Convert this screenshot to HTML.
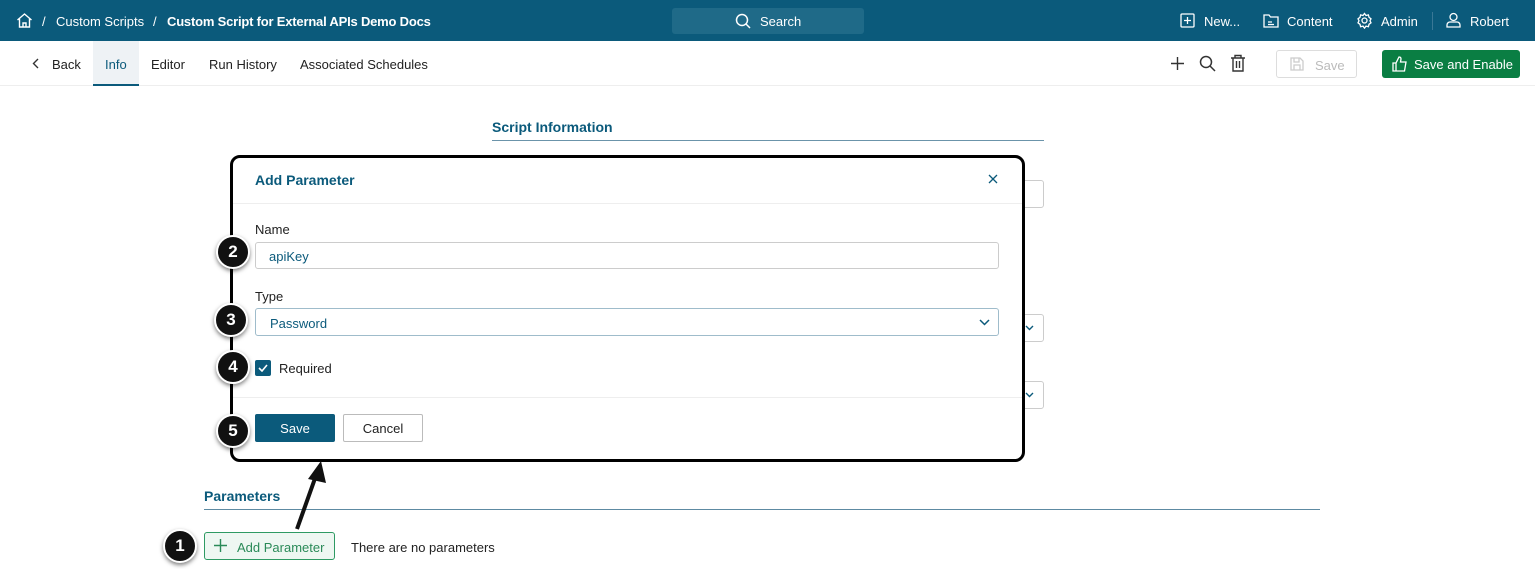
<!DOCTYPE html>
<html><head><style>
*{box-sizing:border-box;margin:0;padding:0}
body{width:1535px;height:569px;overflow:hidden;background:#fff;font-family:"Liberation Sans",sans-serif;font-size:13px;color:#222;position:relative}
.a{position:absolute}
.top{left:0;top:0;width:1535px;height:41px;background:#0b5a7b;color:#fff}
.top span{position:absolute;top:14px;font-size:13px}
.sub{left:0;top:41px;width:1535px;height:45px;border-bottom:1px solid #eee}
.sub span{position:absolute;top:16px;font-size:13px;color:#222}
.badge{width:34px;height:34px;border-radius:50%;background:#111;color:#fff;font-weight:bold;font-size:17px;text-align:center;line-height:30px;border:2px solid #fff;box-shadow:0 2px 4px rgba(0,0,0,.5)}
</style></head><body>
<div class="a top">
<svg class="a" style="left:16px;top:12px" width="17" height="17" viewBox="0 0 17 17" fill="none" stroke="#fff" stroke-width="1.4"><path d="M1.5 8L8.5 2l7 6M3.5 6.5V15h10V6.5M7 15v-4h3v4"/></svg>
<span style="left:42px">/</span><span style="left:56px">Custom Scripts</span><span style="left:153px">/</span><span style="left:167px;font-weight:bold;letter-spacing:-0.2px">Custom Script for External APIs Demo Docs</span>
<div class="a" style="left:672px;top:8px;width:192px;height:26px;background:#1f6a88;border-radius:3px"></div>
<svg class="a" style="left:735px;top:13px" width="16" height="16" fill="none" stroke="#fff" stroke-width="1.5"><circle cx="7" cy="7" r="5.5"/><path d="M11 11l4 4"/></svg>
<span style="left:760px">Search</span>
<svg class="a" style="left:1180px;top:13px" width="15" height="15" fill="none" stroke="#fff" stroke-width="1.3"><rect x="1" y="1" width="13" height="13" rx="1"/><path d="M7.5 4v7M4 7.5h7"/></svg>
<span style="left:1204px">New...</span>
<svg class="a" style="left:1263px;top:13px" width="16" height="15" fill="none" stroke="#fff" stroke-width="1.3"><path d="M1 2h5l1.5 2H15v10H1z"/><path d="M5 9h4M5 11.5h6"/></svg>
<span style="left:1287px">Content</span>
<svg class="a" style="left:1356px;top:12px" width="17" height="17" fill="none" stroke="#fff" stroke-width="1.3"><circle cx="8.5" cy="8.5" r="2.5"/><path d="M8.5 1.5l1.5 2 2.4-.6.6 2.4 2 1.5-1 2 1 2-2 1.5-.6 2.4-2.4-.6-1.5 2-1.5-2-2.4.6-.6-2.4-2-1.5 1-2-1-2 2-1.5.6-2.4 2.4.6z"/></svg>
<span style="left:1381px">Admin</span>
<div class="a" style="left:1432px;top:12px;width:1px;height:18px;background:#3a7896"></div>
<svg class="a" style="left:1446px;top:12px" width="15" height="16" fill="none" stroke="#fff" stroke-width="1.3"><circle cx="7.5" cy="5" r="3.5"/><path d="M1 15v-2a3 3 0 013-3h7a3 3 0 013 3v2z"/></svg>
<span style="left:1470px">Robert</span>
</div>
<div class="a sub">
<svg class="a" style="left:32px;top:17px" width="7" height="11" fill="none" stroke="#333" stroke-width="1.4"><path d="M6 1L1.5 5.5 6 10"/></svg>
<span style="left:52px">Back</span>
<div class="a" style="left:93px;top:0;width:46px;height:45px;background:#eef2f5;border-bottom:2px solid #0b5a7b"></div>
<span style="left:105px;color:#0b5a7b">Info</span><span style="left:151px">Editor</span><span style="left:209px">Run History</span><span style="left:300px">Associated Schedules</span>
<svg class="a" style="left:1171px;top:16px" width="13" height="13" stroke="#333" stroke-width="1.4"><path d="M6.5 0v13M0 6.5h13"/></svg>
<svg class="a" style="left:1199px;top:14px" width="17" height="17" fill="none" stroke="#333" stroke-width="1.5"><circle cx="7" cy="7" r="5.5"/><path d="M11 11l5 5"/></svg>
<svg class="a" style="left:1230px;top:13px" width="16" height="18" fill="none" stroke="#333" stroke-width="1.4"><path d="M1 4h14M5 4V1.5h6V4M3 4v13h10V4M6.5 7v7M9.5 7v7"/></svg>
<div class="a" style="left:1276px;top:9px;width:81px;height:28px;border:1px solid #ddd;border-radius:3px;color:#bbb;padding:7px 0 0 38px">Save</div>
<svg class="a" style="left:1290px;top:16px" width="14" height="14" fill="none" stroke="#ccc" stroke-width="1.3"><path d="M1 1h9l3 3v9H1zM4 1v4h5V1M4 13V8h6v5"/></svg>
<div class="a" style="left:1382px;top:9px;width:138px;height:28px;background:#0a7e43;border-radius:3px;color:#fff;padding:7px 0 0 32px">Save and Enable</div>
<svg class="a" style="left:1392px;top:15px" width="16" height="16" fill="none" stroke="#fff" stroke-width="1.3"><path d="M1 7h3v8H1zM4 7l3-6c1.5 0 2 1 2 2l-.5 3H14l-1.5 9H4"/></svg>
</div>
<div class="a" style="left:492px;top:119px;font-weight:bold;font-size:14px;color:#0b5a7b">Script Information</div>
<div class="a" style="left:492px;top:140px;width:552px;height:1px;background:#6b94aa"></div>
<div class="a" style="left:1000px;top:180px;width:44px;height:28px;border:1px solid #ccc;border-radius:3px"></div>
<div class="a" style="left:1000px;top:314px;width:44px;height:28px;border:1px solid #ccc;border-radius:3px"></div>
<svg class="a" style="left:1025px;top:325px" width="9" height="6" fill="none" stroke="#0b5a7b" stroke-width="1.4"><path d="M1 1l3.5 3.5L8 1"/></svg>
<div class="a" style="left:1000px;top:381px;width:44px;height:28px;border:1px solid #ccc;border-radius:3px"></div>
<svg class="a" style="left:1025px;top:392px" width="9" height="6" fill="none" stroke="#0b5a7b" stroke-width="1.4"><path d="M1 1l3.5 3.5L8 1"/></svg>
<div class="a" style="left:230px;top:155px;width:795px;height:307px;border:3px solid #000;border-radius:10px;background:#fff"></div>
<div class="a" style="left:255px;top:172px;font-weight:bold;font-size:14px;color:#0b5a7b">Add Parameter</div>
<svg class="a" style="left:988px;top:174px" width="10" height="10" stroke="#0b5a7b" stroke-width="1.3"><path d="M1 1l8 8M9 1L1 9"/></svg>
<div class="a" style="left:233px;top:203px;width:789px;height:1px;background:#eee"></div>
<div class="a" style="left:255px;top:222px">Name</div>
<div class="a" style="left:255px;top:242px;width:744px;height:27px;border:1px solid #ccc;border-radius:3px;padding:6px 0 0 13px;color:#0b5a7b">apiKey</div>
<div class="a" style="left:255px;top:289px">Type</div>
<div class="a" style="left:255px;top:308px;width:744px;height:28px;border:1px solid #9fbccb;border-radius:3px;padding:7px 0 0 14px;color:#0b5a7b">Password</div>
<svg class="a" style="left:979px;top:319px" width="11" height="8" fill="none" stroke="#0b5a7b" stroke-width="1.5"><path d="M1 1l4.5 4.5L10 1"/></svg>
<div class="a" style="left:255px;top:360px;width:16px;height:16px;background:#0b5a7b;border-radius:2px"></div>
<svg class="a" style="left:258px;top:364px" width="10" height="8" fill="none" stroke="#fff" stroke-width="1.6"><path d="M1 4l3 3 5-6"/></svg>
<div class="a" style="left:279px;top:361px">Required</div>
<div class="a" style="left:233px;top:397px;width:789px;height:1px;background:#eee"></div>
<div class="a" style="left:255px;top:414px;width:80px;height:28px;background:#0b5a7b;border-radius:2px;color:#fff;text-align:center;line-height:29px">Save</div>
<div class="a" style="left:343px;top:414px;width:80px;height:28px;border:1px solid #bbb;border-radius:2px;text-align:center;line-height:27px">Cancel</div>
<div class="a badge" style="left:216px;top:235px">2</div>
<div class="a badge" style="left:214px;top:303px">3</div>
<div class="a badge" style="left:216px;top:350px">4</div>
<div class="a badge" style="left:216px;top:414px">5</div>
<div class="a" style="left:204px;top:488px;font-weight:bold;font-size:14px;color:#0b5a7b">Parameters</div>
<div class="a" style="left:204px;top:509px;width:1116px;height:1px;background:#5d8aa2"></div>
<svg class="a" style="left:285px;top:455px" width="50" height="80"><path d="M12 74L33 15" stroke="#111" stroke-width="4"/><path d="M36 6L23 24 41 28z" fill="#111"/></svg>
<div class="a" style="left:204px;top:532px;width:131px;height:28px;border:1px solid #2e9a63;border-radius:3px;background:#eef7f2;color:#2a8a58;padding:7px 0 0 32px">Add Parameter</div>
<svg class="a" style="left:214px;top:539px" width="13" height="13" stroke="#2a8a58" stroke-width="1.4"><path d="M6.5 0v13M0 6.5h13"/></svg>
<div class="a" style="left:351px;top:540px">There are no parameters</div>
<div class="a badge" style="left:163px;top:529px">1</div>
</body></html>
